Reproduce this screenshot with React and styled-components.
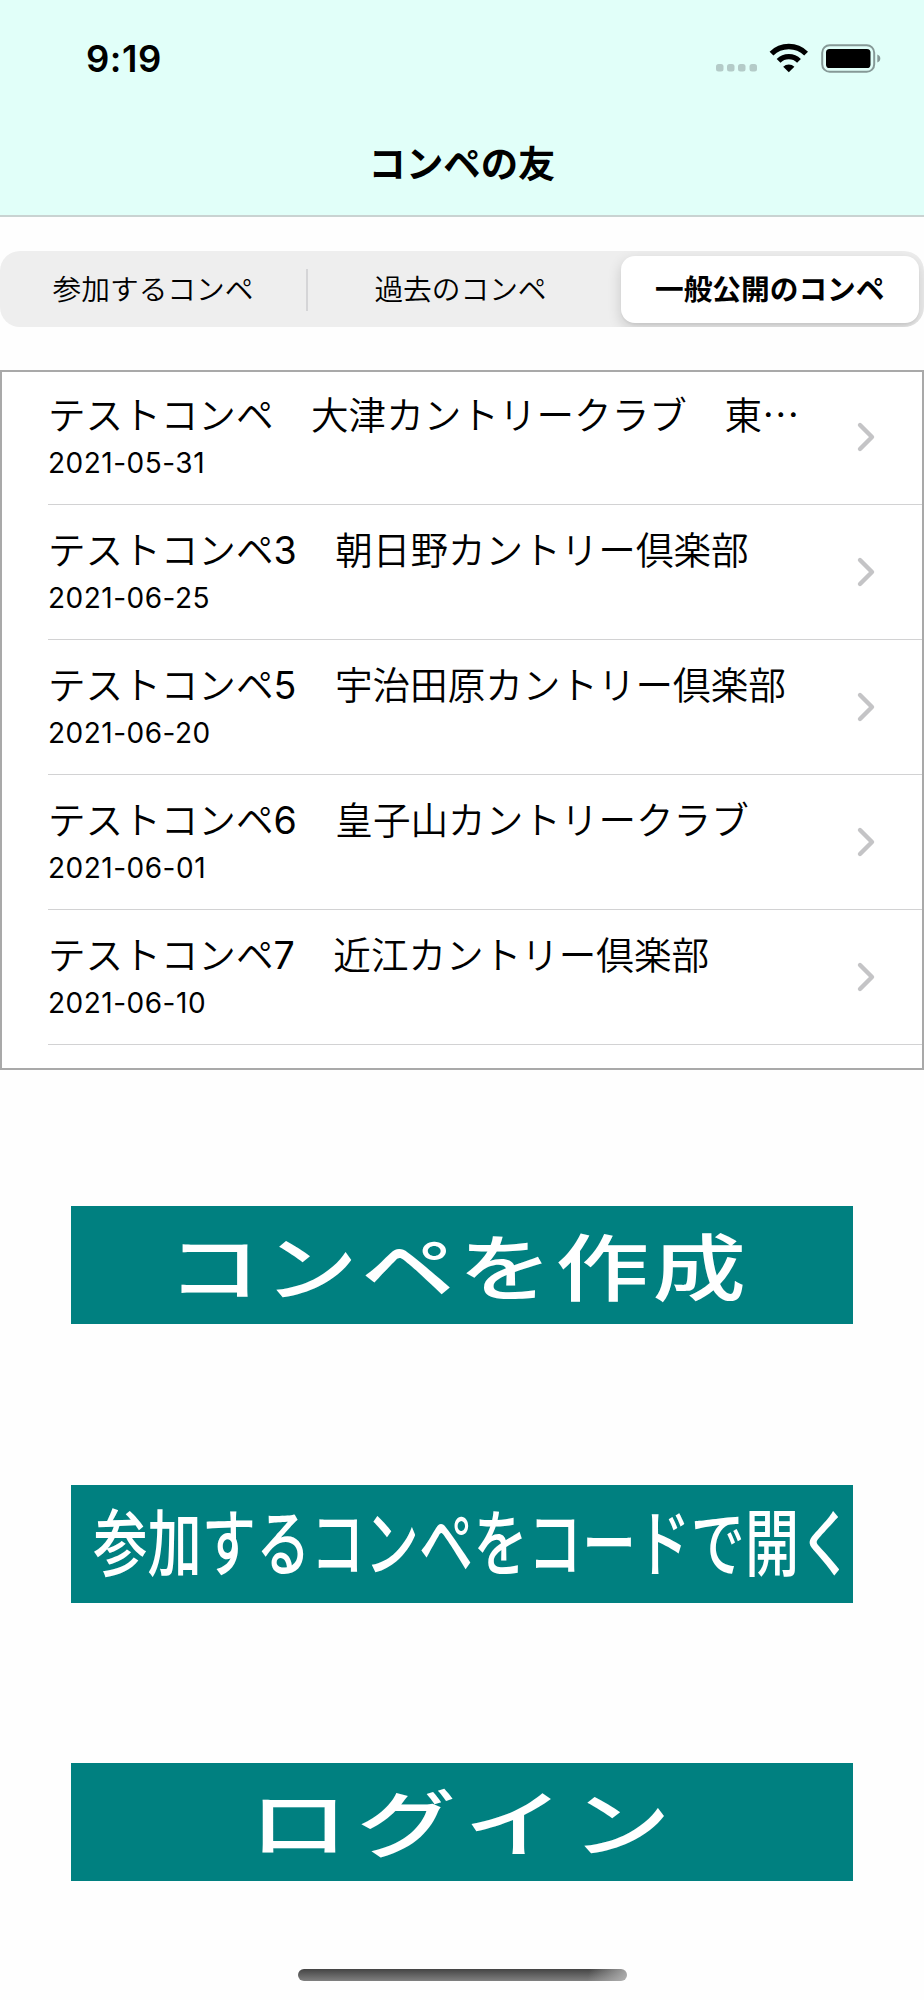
import React from "react";
import styled, { createGlobalStyle } from "styled-components";

const GlobalStyle = createGlobalStyle`
    * {
        box-sizing: border-box;
    }
    body {
        margin: 0;
        background: #fefefe;
        color: #000;
        font-family: Inter, "Noto Sans CJK JP", sans-serif;
    }
    button {
        padding: 0;
        border: 0;
        color: inherit;
        font-family: inherit;
    }
`;

const Screen = styled.div`
    display: flex;
    flex-direction: column;
    width: 924px;
    height: 2000px;
    overflow: hidden;
`;

const Header = styled.header`
    height: 217px;
    background: #e1fff9;
    border-bottom: 2px solid #c9d3d2;
`;

const StatusBar = styled.div`
    display: flex;
    align-items: center;
    justify-content: space-between;
    height: 118px;
    padding: 0 42px 0 86px;
`;

const Time = styled.span`
    font-size: 36.5px;
    font-weight: 600;
    letter-spacing: 0.5px;
`;

const Title = styled.h1`
    margin: 0;
    height: 92px;
    line-height: 93px;
    text-align: center;
    font-size: 37.4px;
    font-weight: 700;
`;

const Segments = styled.nav`
    display: grid;
    grid-template-columns: 308px 305px 1fr;
    height: 76px;
    margin-top: 34px;
    padding: 5px 5px 4px 0;
    border-radius: 20px;
    background: #eeeeee;
    overflow: hidden;
`;

const Segment = styled.button`
    display: flex;
    align-items: center;
    justify-content: center;
    margin-left: ${(props) => (props.$active ? "7.5px" : "0")};
    border-radius: 14px;
    background: ${(props) => (props.$active ? "#fff" : "transparent")};
    box-shadow: ${(props) => (props.$active ? "0 5px 14px rgba(0, 0, 0, 0.16), 0 2px 2px rgba(0, 0, 0, 0.04)" : "none")};
    font-size: 28.7px;
    font-weight: ${(props) => (props.$active ? 700 : 350)};
    white-space: nowrap;
`;

const SegmentLabel = styled.span`
    flex: 1;
    line-height: 42px;
    text-align: center;
    border-right: ${(props) => (props.$divider ? "2px solid #d5d5d7" : "0")};
`;

const List = styled.ul`
    height: 700px;
    margin: 43px 0 0;
    padding: 0 0 0 46px;
    border: 2px solid #a9a9a9;
    list-style: none;
    background: #fff;
`;

const Row = styled.li`
    display: flex;
    align-items: center;
    justify-content: space-between;
    height: 135px;
    padding-right: 46px;
    border-bottom: 1px solid #d2d2d3;

    &:first-child {
        margin-top: -2px;
    }
`;

const RowText = styled.div`
    padding-top: 2px;
`;

const RowTitle = styled.div`
    height: 50px;
    line-height: 49px;
    font-size: 37.6px;
    font-weight: 350;
    white-space: pre;
`;

const Numeral = styled.span`
    font-weight: 400;
    letter-spacing: 1px;
`;

const Ellipsis = styled.span`
    font-family: "Noto Sans CJK JP", sans-serif;
    line-height: 0;
`;

const RowDate = styled.div`
    height: 44px;
    line-height: 44px;
    font-size: 28px;
    letter-spacing: 0.5px;
`;

const Actions = styled.div`
    display: flex;
    flex-direction: column;
    align-items: center;
    gap: 160.5px;
    margin-top: 136px;
`;

const ActionButton = styled.button`
    display: flex;
    align-items: center;
    justify-content: center;
    width: 782px;
    height: 118px;
    background: #008080;
    color: #fff;
    font-size: 73px;
    font-weight: 500;
    white-space: nowrap;
`;

const Stretch = styled.span`
    flex: none;
    line-height: 100px;
    letter-spacing: ${(props) => props.$spacing}px;
    transform: translate(${(props) => props.$shift}) scaleX(${(props) => props.$scale});
`;

const HomeIndicator = styled.div`
    width: 329px;
    height: 12px;
    margin: auto auto 19px 298px;
    border-radius: 6px;
    background:
        linear-gradient(100deg, transparent 88%, rgba(190, 190, 190, 0.8) 100%),
        linear-gradient(#444, #808080);
`;

const events = [
    { name: "テストコンペ", number: "", course: "大津カントリークラブ　東", date: "2021-05-31", cut: true },
    { name: "テストコンペ", number: "3", course: "朝日野カントリー倶楽部", date: "2021-06-25" },
    { name: "テストコンペ", number: "5", course: "宇治田原カントリー倶楽部", date: "2021-06-20" },
    { name: "テストコンペ", number: "6", course: "皇子山カントリークラブ", date: "2021-06-01" },
    { name: "テストコンペ", number: "7", course: "近江カントリー倶楽部", date: "2021-06-10" },
];

const actions = [
    { label: "コンペを作成", scale: 1.28, spacing: 2.8, shift: "-4px, 4px" },
    { label: "参加するコンペをコードで開く", scale: 0.742, spacing: 0.2, shift: "11px, 0px" },
    { label: "ログイン", scale: 1.36, spacing: 6, shift: "2px, 3px" },
];

const StatusIcons = () => (
    <svg width="166" height="32" viewBox="0 0 166 32">
        <g fill="#b4cbc8">
            <rect x="0" y="21" width="7.5" height="7.5" rx="2.5" />
            <rect x="11" y="21" width="7.5" height="7.5" rx="2.5" />
            <rect x="22" y="21" width="7.5" height="7.5" rx="2.5" />
            <rect x="33.5" y="21" width="7.5" height="7.5" rx="2.5" />
        </g>
        <g fill="none" stroke="#000" strokeWidth="5.4">
            <path d="M55.5 10.7a24.5 24.5 0 0 1 34.6 0" />
            <path d="M62.6 17.8a14.5 14.5 0 0 1 20.4 0" />
        </g>
        <path d="M72.8 29.3l-5.6-5.6a8.2 8.2 0 0 1 11.2 0z" />
        <rect x="106.2" y="2.2" width="52" height="26.6" rx="7.5" fill="none" stroke="#869997" strokeWidth="2" />
        <rect x="110" y="6" width="44.5" height="19" rx="3.6" />
        <path d="M161.3 11.5c4 1.2 4 6.8 0 8z" fill="#869997" />
    </svg>
);

const Chevron = () => (
    <svg width="20" height="32" viewBox="0 0 20 32">
        <path d="M4 4l12 12L4 28" fill="none" stroke="#c4c4c6" strokeWidth="4.4" strokeLinecap="round" strokeLinejoin="round" />
    </svg>
);

const App = () => {
    return (
        <Screen lang="ja">
            <GlobalStyle />
            <Header>
                <StatusBar>
                    <Time>9:19</Time>
                    <StatusIcons />
                </StatusBar>
                <Title>コンペの友</Title>
            </Header>
            <Segments>
                <Segment><SegmentLabel $divider>参加するコンペ</SegmentLabel></Segment>
                <Segment><SegmentLabel>過去のコンペ</SegmentLabel></Segment>
                <Segment $active><SegmentLabel>一般公開のコンペ</SegmentLabel></Segment>
            </Segments>
            <List>
                {events.map((event) => (
                    <Row key={event.date}>
                        <RowText>
                            <RowTitle>
                                {event.name}
                                {event.number && <Numeral>{event.number}</Numeral>}
                                {"　" + event.course}
                                {event.cut && <Ellipsis>…</Ellipsis>}
                            </RowTitle>
                            <RowDate>{event.date}</RowDate>
                        </RowText>
                        <Chevron />
                    </Row>
                ))}
            </List>
            <Actions>
                {actions.map((action) => (
                    <ActionButton key={action.label}>
                        <Stretch $scale={action.scale} $spacing={action.spacing} $shift={action.shift}>
                            {action.label}
                        </Stretch>
                    </ActionButton>
                ))}
            </Actions>
            <HomeIndicator />
        </Screen>
    );
};

export default App;
